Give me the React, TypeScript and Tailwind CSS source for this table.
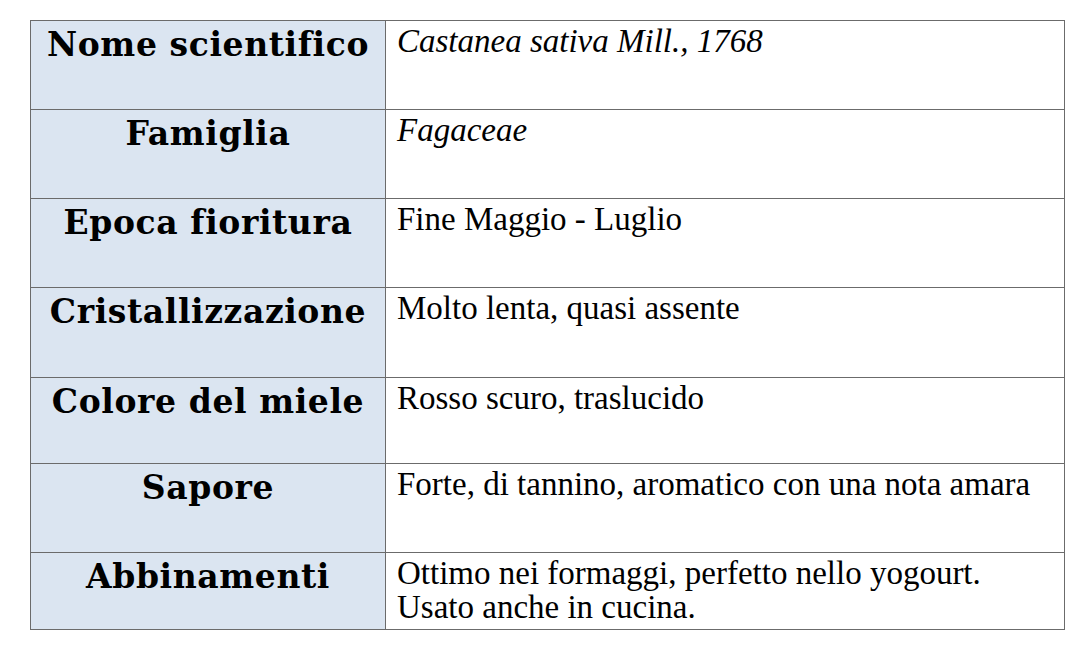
const rows: { label: string; value: string; italic?: boolean; h: string }[] = [
  { label: 'Nome scientifico', value: 'Castanea sativa Mill., 1768', italic: true, h: 'h-[89px]' },
  { label: 'Famiglia', value: 'Fagaceae', italic: true, h: 'h-[89px]' },
  { label: 'Epoca fioritura', value: 'Fine Maggio - Luglio', h: 'h-[89px]' },
  { label: 'Cristallizzazione', value: 'Molto lenta, quasi assente', h: 'h-[90px]' },
  { label: 'Colore del miele', value: 'Rosso scuro, traslucido', h: 'h-[86px]' },
  { label: 'Sapore', value: 'Forte, di tannino, aromatico con una nota amara', h: 'h-[89px]' },
  { label: 'Abbinamenti', value: 'Ottimo nei formaggi, perfetto nello yogourt. Usato anche in cucina.', h: 'h-[77px]' },
]

export default function App() {
  return (
    <div className="w-[1088px] h-[656px] bg-white pt-[20px] pl-[30px]">
      <table className="w-[1035px] border-collapse table-fixed">
        <colgroup>
          <col className="w-[355px]" />
          <col />
        </colgroup>
        <tbody>
          {rows.map((r) => (
            <tr key={r.label} className={r.h}>
              <td className="border border-[#6b6b6b] bg-[#dbe5f1] align-top text-center pt-[4px] font-['DejaVu_Serif',serif] font-bold text-[33px] tracking-[0.6px] leading-[40px] text-black whitespace-nowrap">
                {r.label}
              </td>
              <td className={`border border-[#6b6b6b] align-top pl-[11px] pr-[20px] pt-[3px] font-['Liberation_Serif',serif] text-[33px] leading-[34px] text-black ${r.italic ? 'italic' : ''}`}>
                {r.value}
              </td>
            </tr>
          ))}
        </tbody>
      </table>
    </div>
  )
}
